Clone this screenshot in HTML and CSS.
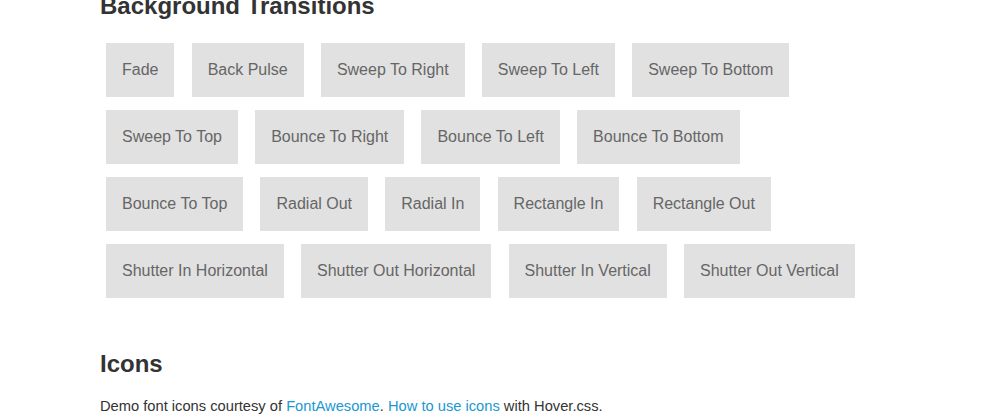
FILE: index.html
```html
<!DOCTYPE html>
<html>
<head>
<meta charset="utf-8">
<link rel="stylesheet" href="styles.css">
</head>
<body>
<div class="page">
  <section class="group group-bg">
    <h2 class="title title-first">Background Transitions</h2>
    <div class="buttons">
      <a class="button">Fade</a>
      <a class="button">Back Pulse</a>
      <a class="button">Sweep To Right</a>
      <a class="button">Sweep To Left</a>
      <a class="button">Sweep To Bottom</a>
      <a class="button">Sweep To Top</a>
      <a class="button">Bounce To Right</a>
      <a class="button">Bounce To Left</a>
      <a class="button">Bounce To Bottom</a>
      <a class="button">Bounce To Top</a>
      <a class="button">Radial Out</a>
      <a class="button">Radial In</a>
      <a class="button">Rectangle In</a>
      <a class="button">Rectangle Out</a>
      <a class="button">Shutter In Horizontal</a>
      <a class="button">Shutter Out Horizontal</a>
      <a class="button">Shutter In Vertical</a>
      <a class="button">Shutter Out Vertical</a>
    </div>
  </section>
  <section class="group group-icons">
    <h2 class="title">Icons</h2>
    <p class="note">Demo font icons courtesy of <a class="link">FontAwesome</a>. <a class="link">How to use icons</a> with Hover.css.</p>
  </section>
</div>
</body>
</html>
```
FILE: styles.css
```css
html, body {
  margin: 0;
  padding: 0;
  background: #ffffff;
  overflow: hidden;
}
body {
  font-family: "Liberation Sans", Arial, Helvetica, sans-serif;
  color: #333333;
}
.page {
  width: 800px;
  margin: 0 auto;
}
.title {
  margin: 0;
  font-size: 24px;
  line-height: 29px;
  font-weight: bold;
  color: #333333;
}
.title-first {
  margin-top: -9px;
}
.buttons {
  display: flex;
  flex-wrap: wrap;
  align-items: flex-start;
  gap: 13px 17.2px;
  padding: 23px 30px 0 6px;
}
.button {
  display: block;
  padding: 16px;
  background: #e1e1e1;
  color: #666666;
  font-size: 16px;
  line-height: 22px;
  cursor: pointer;
  text-decoration: none;
}
.group-icons {
  padding-top: 51px;
}
.note {
  margin: 17px 0 0 0;
  font-size: 14.7px;
  line-height: 22px;
  color: #333333;
}
.link {
  color: #2098d1;
  text-decoration: none;
}
```
